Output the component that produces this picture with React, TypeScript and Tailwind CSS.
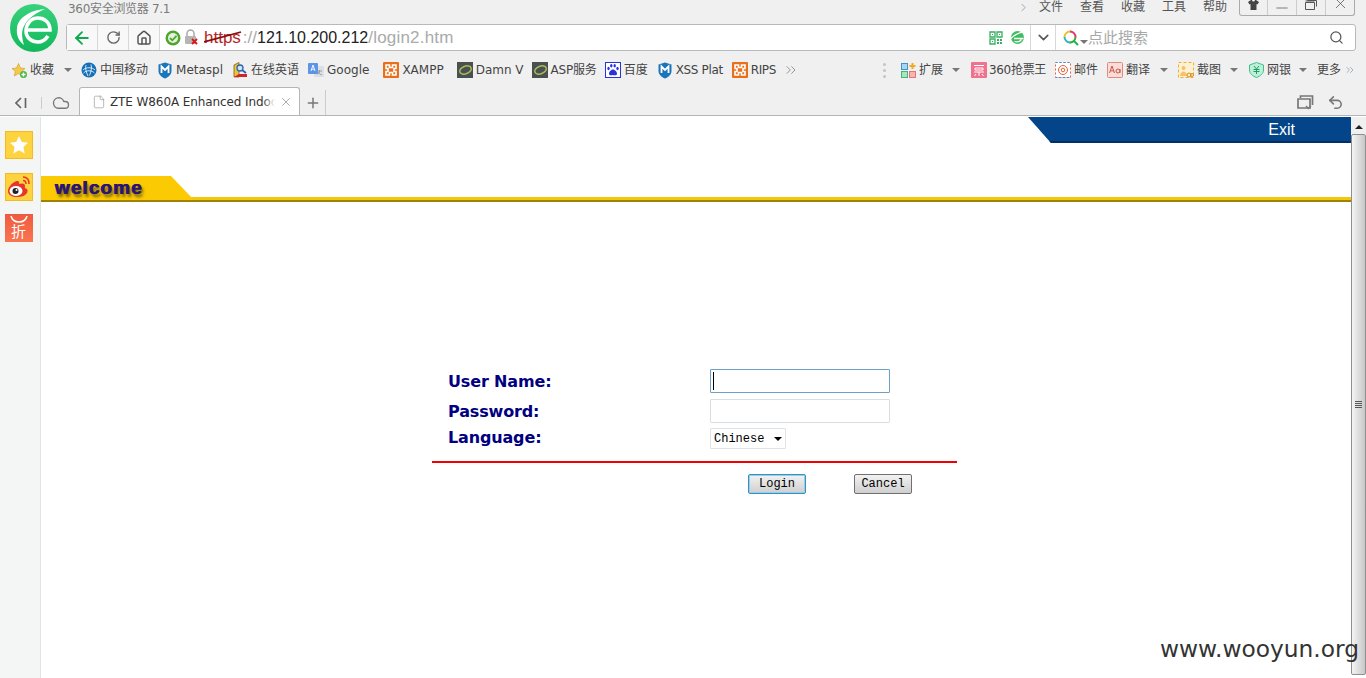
import type { ReactNode } from "react";
import { ArrowLeft, RotateCw, Home, Search, ChevronDown, ChevronRight, Minus, X, Plus, Cloud, File, ChevronsRight, Undo2 } from "lucide-react";

const Caret = ({ className = "" }: { className?: string }) => (
    <span className={`inline-block w-0 h-0 border-x-[4px] border-x-transparent border-t-[4px] border-t-[#777] ${className}`} />
);

const Xampp = () => (
    <svg width="16" height="16" viewBox="0 0 16 16">
        <rect width="16" height="16" rx="1" fill="#e8701a" />
        <path d="M3 3h3.500v2.500h3V3H13v3.500h-2v3h2V13H9.500v-2.500h-3V13H3V9.500h2v-3H3z" fill="none" stroke="#fff" strokeWidth="1.600" />
    </svg>
);

const Shield = ({ fill = "#1b75bb" }: { fill?: string }) => (
    <svg width="14" height="17" viewBox="0 0 14 17">
        <path d="M7 .5 13.500 2.500V9c0 3.500-3 6-6.500 7.500C3.500 15 .5 12.500.5 9V2.500z" fill={fill} />
        <path d="M3.500 11V4.500L7 8l3.500-3.500V11" fill="none" stroke="#fff" strokeWidth="1.800" />
    </svg>
);

const Dvwa = () => (
    <svg width="16" height="16" viewBox="0 0 16 16">
        <rect width="16" height="16" fill="#4a4f52" />
        <ellipse cx="8.500" cy="8" rx="6" ry="3.800" transform="rotate(-20 8.500 8)" fill="none" stroke="#a8bb55" strokeWidth="1.500" />
    </svg>
);

type Mark = { icon: ReactNode; label: string; ml: string; gap: string; caret?: string; text?: string };

const leftMarks: Mark[] = [
    {
        icon: (
            <svg width="17" height="17" viewBox="0 0 17 17">
                <path d="M7.500 1.500 9.500 6l4.500.5-3.300 3 1 4.500-4.200-2.400L3.300 14l1-4.500L1 6.500 5.500 6z" fill="#f5c94a" stroke="#c99b2a" strokeWidth=".6" />
                <circle cx="12.500" cy="12.500" r="3.500" fill="#4fb848" />
                <path d="M12.500 10.500v4M10.500 12.500h4" stroke="#fff" strokeWidth="1.300" />
            </svg>
        ),
        label: "收藏",
        ml: "ml-[11px]",
        gap: "gap-[2px]",
        caret: "ml-[8px]",
    },
    {
        icon: (
            <svg width="16" height="16" viewBox="0 0 16 16">
                <circle cx="8" cy="8" r="7.500" fill="#1670b8" />
                <path d="M2 8c3-3 9-3 12 0M2.500 11c3-3 8-3 11 0M5 3c-1 3 0 7 2 11M10 2.500c1 3 0 8-1.500 11" fill="none" stroke="#fff" strokeWidth=".8" />
            </svg>
        ),
        label: "中国移动",
        ml: "ml-[9px]",
        gap: "gap-[3px]",
    },
    { icon: <Shield />, label: "Metaspl", ml: "ml-[10px]", gap: "gap-[4px]" },
    {
        icon: (
            <svg width="16" height="16" viewBox="0 0 16 16">
                <path d="M2 15V3l5-2.500V15z" fill="#e9c33a" stroke="#8a5a10" strokeWidth=".8" />
                <path d="M2 15h13v-3H7z" fill="#d1232a" />
                <circle cx="8" cy="6" r="3" fill="#cfe6f7" stroke="#2a63b5" strokeWidth="1.300" />
                <path d="m10 8 4 3" stroke="#2a63b5" strokeWidth="1.800" />
            </svg>
        ),
        label: "在线英语",
        ml: "ml-[9px]",
        gap: "gap-[3px]",
    },
    {
        icon: (
            <svg width="16" height="16" viewBox="0 0 16 16">
                <rect x="6" y="4" width="10" height="11" rx="1" fill="#dcdfe4" />
                <rect width="10" height="11" rx="1" y="1" fill="#5e94e8" />
                <path d="m3 9 2-6 2 6M3.800 7.200h2.400" fill="none" stroke="#fff" strokeWidth=".9" />
                <path d="M9.500 9h4.500M11.500 8v1c0 2-1 3-2 3.500M10.500 10c.5 1.500 2 2.500 3.500 3" fill="none" stroke="#8b8f96" strokeWidth=".8" />
            </svg>
        ),
        label: "Google",
        ml: "ml-[9px]",
        gap: "gap-[3px]",
    },
    { icon: <Xampp />, label: "XAMPP", ml: "ml-[14px]", gap: "gap-[3px]" },
    { icon: <Dvwa />, label: "Damn V", ml: "ml-[13px]", gap: "gap-[3px]" },
    { icon: <Dvwa />, label: "ASP服务", ml: "ml-[8px]", gap: "gap-[3px]", text: "tracking-[-0.2px]" },
    {
        icon: (
            <svg width="16" height="16" viewBox="0 0 16 16">
                <rect x=".5" y=".5" width="15" height="15" fill="#fff" stroke="#2932e1" />
                <path d="M8 7.500c-2 0-4 2.500-4 4.200 0 2 2.500 1.700 4 1.300 1.500.4 4 .7 4-1.300 0-1.700-2-4.200-4-4.200z" fill="#2932e1" />
                <ellipse cx="3.500" cy="6.500" rx="1.200" ry="1.700" fill="#2932e1" />
                <ellipse cx="6.300" cy="3.800" rx="1.200" ry="1.800" fill="#2932e1" />
                <ellipse cx="9.700" cy="3.800" rx="1.200" ry="1.800" fill="#2932e1" />
                <ellipse cx="12.500" cy="6.500" rx="1.200" ry="1.700" fill="#2932e1" />
            </svg>
        ),
        label: "百度",
        ml: "ml-[8px]",
        gap: "gap-[3px]",
    },
    { icon: <Shield />, label: "XSS Plat", ml: "ml-[10px]", gap: "gap-[4px]", text: "tracking-[-0.35px]" },
    { icon: <Xampp />, label: "RIPS", ml: "ml-[9px]", gap: "gap-[3px]", text: "tracking-[-0.4px]" },
];

const rightMarks: Mark[] = [
    {
        icon: (
            <svg width="16" height="16" viewBox="0 0 16 16">
                <rect x=".5" y="1.500" width="6" height="6" fill="#a9d4f2" stroke="#4a90c8" />
                <rect x=".5" y="9.500" width="6" height="6" fill="#a3e6c0" stroke="#49b27c" />
                <rect x="8.500" y="9.500" width="6" height="6" fill="#f8b3b3" stroke="#d97a7a" />
                <path d="M11.500 1v6M8.500 4h6" stroke="#f3a91f" strokeWidth="2" />
            </svg>
        ),
        label: "扩展",
        ml: "ml-0",
        gap: "gap-[2px]",
        caret: "ml-[7px]",
    },
    {
        icon: (
            <svg width="16" height="16" viewBox="0 0 16 16">
                <rect width="16" height="16" rx="1" fill="#f0728f" />
                <path d="M3 3.500h10M4 6h8v2H4zM3 10h10M8 10v4M5 12l-1.500 2M11 12l1.500 2" fill="none" stroke="#fff" strokeWidth="1" />
            </svg>
        ),
        label: "360抢票王",
        ml: "ml-[11px]",
        gap: "gap-[2px]",
        text: "tracking-[-0.3px]",
    },
    {
        icon: (
            <svg width="16" height="16" viewBox="0 0 16 16">
                <rect x=".5" y=".5" width="15" height="15" fill="#fff" stroke="#e8603c" strokeDasharray="2 2" />
                <path d="M.5 15.500h15M.5.5h15" stroke="#3b8ee8" strokeDasharray="2 2" />
                <circle cx="8" cy="8" r="4.500" fill="none" stroke="#e8603c" />
                <circle cx="8" cy="8" r="1.800" fill="none" stroke="#e8603c" />
            </svg>
        ),
        label: "邮件",
        ml: "ml-[9px]",
        gap: "gap-[3px]",
    },
    {
        icon: (
            <svg width="16" height="16" viewBox="0 0 16 16">
                <rect x=".5" y=".5" width="15" height="15" rx="1" fill="#fbdcd6" stroke="#d98c80" />
                <path d="m2.500 11 2.500-7 2.500 7M3.400 8.800h3.200M13 7v4" fill="none" stroke="#c9574a" />
                <circle cx="11" cy="9" r="2" fill="none" stroke="#c9574a" />
            </svg>
        ),
        label: "翻译",
        ml: "ml-[9px]",
        gap: "gap-[3px]",
        caret: "ml-[7px]",
    },
    {
        icon: (
            <svg width="16" height="16" viewBox="0 0 16 16">
                <rect x=".5" y=".5" width="15" height="15" fill="#fdf1d2" stroke="#f2ae30" strokeDasharray="3 2" />
                <circle cx="5.500" cy="6" r="2" fill="#f2c36b" />
                <path d="M2 14c0-3 2-4.500 3.500-4.500S9 11 9 14z" fill="#f2c36b" />
                <circle cx="11" cy="13" r="2" fill="none" stroke="#d98a20" />
                <circle cx="14" cy="13" r="1.500" fill="none" stroke="#d98a20" />
            </svg>
        ),
        label: "截图",
        ml: "ml-[10px]",
        gap: "gap-[3px]",
        caret: "ml-[6px]",
    },
    {
        icon: (
            <svg width="15" height="16" viewBox="0 0 15 16">
                <path d="M7.500.5 14.500 3v5c0 3.500-3 6-7 7.500-4-1.500-7-4-7-7.500V3z" fill="#bdf0d8" stroke="#3fbf8a" />
                <path d="m5 4 2.500 3L10 4M4.500 7.500h6M4.500 9.500h6M7.500 7v5" fill="none" stroke="#1f9a68" />
            </svg>
        ),
        label: "网银",
        ml: "ml-[11px]",
        gap: "gap-[3px]",
        caret: "ml-[5px]",
    },
];

const menus = ["文件", "查看", "收藏", "工具", "帮助"];

const BookmarkItem = ({ item }: { item: Mark }) => (
    <div className={`flex items-center shrink-0 ${item.ml} ${item.gap}`}>
        {item.icon}
        <span className={`whitespace-nowrap ${item.text ?? ""}`}>{item.label}</span>
        {item.caret && <Caret className={item.caret} />}
    </div>
);

const App = () => {
    return (
        <div className="relative w-[1366px] h-[678px] overflow-hidden bg-white text-[12px] text-[#444] [font-family:'DejaVu_Sans','Noto_Sans_CJK_SC',sans-serif]">
            {/* browser frame */}
            <div className="relative h-[116px] bg-[#f0f0f0] border-b border-[#b5b5b5]">
                <svg className="absolute left-[10px] top-[4px]" width="48" height="48" viewBox="0 0 48 48">
                    <defs>
                        <linearGradient id="logoFill" x1="0" y1="0" x2="0" y2="1">
                            <stop offset="0" stopColor="#38d27c" />
                            <stop offset="1" stopColor="#12b85c" />
                        </linearGradient>
                    </defs>
                    <circle cx="24" cy="24" r="24" fill="url(#logoFill)" />
                    <path d="M17 26H40C40 18 34 14 28 14 21 14 16 20 16 27 16 34 22 38 28 38 33 38 36 35 38 32" fill="none" stroke="#fff" strokeWidth="3.600" />
                    <path d="M35 5C20 6 8 14 7 24 6 32 9 37 14 41 12 34 11 28 14 22 18 14 26 9 35 5z" fill="#fff" />
                </svg>

                <div className="flex h-[24px] pl-[68px] pt-[1px]">
                    <span className="text-[12px] tracking-[-0.3px] text-[#7a7a7a] leading-[16px]">360安全浏览器 7.1</span>
                    <div className="ml-auto flex items-start text-[#555]">
                        <ChevronRight size={13} strokeWidth={1.3} className="text-[#888] mr-[9px]" />
                        {menus.map((m) => (
                            <span key={m} className="w-[41px] leading-[13px] whitespace-nowrap">{m}</span>
                        ))}
                        <div className="-mt-[1px] mr-[11px] ml-[-5px] flex h-[16px] w-[116px] rounded-b-[3px] border border-t-0 border-[#aaa] text-[#555]">
                            <div className="flex w-[28px] justify-center border-r border-[#ccc]">
                                <svg width="13" height="10" viewBox="0 0 13 10"><path d="M4 0 1 2l1.500 2.500L3.500 4v6h6V4l1 .5L12 2 9 0H8a1.500 1.500 0 0 1-3 0z" fill="#444" /></svg>
                            </div>
                            <div className="flex w-[29px] justify-center border-r border-[#ccc]"><Minus size={18} strokeWidth={1} className="-mt-[1px]" /></div>
                            <div className="flex w-[29px] justify-center border-r border-[#ccc]">
                                <svg width="12" height="10" viewBox="0 0 12 10"><path d="M.5 2.500h9v7h-9zM.5 1h9M2.500 0v.5h9v6" fill="none" stroke="#555" /></svg>
                            </div>
                            <div className="flex flex-1 justify-center"><X size={17} strokeWidth={1.100} className="-mt-[5px]" /></div>
                        </div>
                    </div>
                </div>

                {/* address bar */}
                <div className="ml-[66px] mr-[10px] flex h-[27px] items-center rounded-[3px] border border-[#b9b9b9] bg-white">
                    <div className="flex h-full w-[31px] items-center justify-center border-r border-[#d8d8d8] bg-[#f8f8f8]">
                        <ArrowLeft size={20} strokeWidth={2.2} className="text-[#11a84f]" />
                    </div>
                    <div className="flex h-full w-[31px] items-center justify-center border-r border-[#d8d8d8] bg-[#f8f8f8]">
                        <RotateCw size={15} strokeWidth={2.200} className="text-[#666]" />
                    </div>
                    <div className="flex h-full w-[31px] items-center justify-center border-r border-[#d8d8d8] bg-[#f8f8f8]">
                        <Home size={16} strokeWidth={2.200} className="text-[#555]" />
                    </div>
                    <svg className="ml-[5px]" width="16" height="16" viewBox="0 0 16 16">
                        <circle cx="8" cy="8" r="7.500" fill="#4fa52e" />
                        <circle cx="8" cy="8" r="5" fill="#e6f3dc" />
                        <path d="m5 8 2.300 2.300L11.500 5.800" fill="none" stroke="#4fa52e" strokeWidth="1.800" />
                    </svg>
                    <svg className="ml-[3px]" width="15" height="17" viewBox="0 0 15 17">
                        <path d="M3 7V4.500a3.500 3.500 0 0 1 7 0V7" fill="none" stroke="#aaa" strokeWidth="1.500" />
                        <rect x="1" y="7" width="11" height="8" rx="1" fill="#b5b5b5" />
                        <path d="m8 10 5 5M13 10l-5 5" stroke="#d8161b" strokeWidth="1.800" />
                    </svg>
                    <div className="ml-[5px] flex flex-1 items-baseline text-[17px] leading-[20px] text-[#aaa] [font-family:'Liberation_Sans',sans-serif]">
                        <span className="relative text-[#b32a2a]">
                            https
                            <svg className="absolute left-0 top-[3px]" width="38" height="14" viewBox="0 0 38 14">
                                <path d="M0 11 37 1" stroke="#8a0c0c" strokeWidth="1.800" />
                            </svg>
                        </span>
                        <span className="ml-[2px]">://</span>
                        <span className="text-[16px] text-[#222]">121.10.200.212</span>
                        <span className="tracking-[0.2px]">/login2.htm</span>
                    </div>
                    <svg width="14" height="14" viewBox="0 0 14 14">
                        <path d="M1 1h5v5H1zM8 1h5v5H8zM1 8h5v5H1z" fill="none" stroke="#37b060" strokeWidth="1.300" />
                        <path d="M3 3h1v1H3zM10 3h1v1h-1zM3 10h1v1H3zM8 8h2v2H8zM11 8h2v2h-2zM8 11h2v2H8zM11 11h2v2h-2z" fill="#37b060" />
                    </svg>
                    <svg className="ml-[7px]" width="15" height="15" viewBox="0 0 15 15">
                        <circle cx="7.500" cy="7.500" r="6.500" fill="#3ebd5e" />
                        <path d="M1 8.500C4 4.500 9 3 14.500 1M4 8.500h9.500M4.500 11.500c3 1 5.500 0 7-2" fill="none" stroke="#fff" strokeWidth="1.300" />
                    </svg>
                    <div className="ml-[5px] flex h-full w-[26px] items-center justify-center border-x border-[#d8d8d8]">
                        <ChevronDown size={17} strokeWidth={2.2} className="text-[#555]" />
                    </div>
                    <div className="flex h-full w-[299px] items-center">
                        <svg className="ml-[7px]" width="16" height="16" viewBox="0 0 16 16">
                            <circle cx="7" cy="7" r="5.500" fill="none" stroke="#e9c11e" strokeWidth="1.800" />
                            <path d="M7 1.500a5.500 5.500 0 0 1 5.500 5.500" fill="none" stroke="#e8348c" strokeWidth="1.800" />
                            <path d="M1.500 7A5.500 5.500 0 0 0 7 12.500" fill="none" stroke="#25b8e6" strokeWidth="1.800" />
                            <path d="M7 12.500A5.500 5.500 0 0 0 12.500 7" fill="none" stroke="#23b04a" strokeWidth="1.800" />
                            <path d="m11 11 4 4" stroke="#23b04a" strokeWidth="2" />
                        </svg>
                        <Caret className="mt-[9px] ml-[1px] border-x-[2.500px] border-t-[3px] border-t-[#555]" />
                        <span className="text-[15px] leading-[20px] text-[#a8a8a8]">点此搜索</span>
                        <Search size={15} strokeWidth={2} className="ml-auto mr-[11px] text-[#555]" />
                    </div>
                </div>

                {/* bookmarks */}
                <div className="flex h-[38px] items-center">
                    {leftMarks.map((m) => (
                        <BookmarkItem key={m.label + m.ml} item={m} />
                    ))}
                    <ChevronsRight size={16} strokeWidth={1.300} className="ml-[7px] text-[#888]" />
                    <div className="ml-[84px] mr-[15px] flex flex-col gap-[3px]">
                        <span className="h-[3px] w-[3px] rounded-full bg-[#c4c4c4]" />
                        <span className="h-[3px] w-[3px] rounded-full bg-[#c4c4c4]" />
                        <span className="h-[3px] w-[3px] rounded-full bg-[#c4c4c4]" />
                    </div>
                    {rightMarks.map((m) => (
                        <BookmarkItem key={m.label} item={m} />
                    ))}
                    <span className="ml-[10px] whitespace-nowrap">更多</span>
                    <ChevronsRight size={12} strokeWidth={1.500} className="ml-[3px] text-[#8a9bb0]" />
                </div>

                {/* tabs */}
                <div className="flex h-[26px] items-end">
                    <div className="flex h-[25px] w-[79px] items-center">
                        <svg className="ml-[15px]" width="12" height="12" viewBox="0 0 12 12"><path d="M6 1 1 6l5 5M10.500 1v10" fill="none" stroke="#666" strokeWidth="1.700" /></svg>
                        <span className="ml-[14px] h-[12px] w-px bg-[#ccc]" />
                        <Cloud size={18} strokeWidth={1.800} className="ml-[10px] text-[#777]" />
                    </div>
                    <div className="relative z-10 flex h-[28px] w-[221px] items-center rounded-t-[3px] border border-b-0 border-[#b5b5b5] bg-white pl-[12px] text-[#333]">
                        <File size={14} strokeWidth={1} className="text-[#888]" />
                        <span className="relative ml-[4px] w-[165px] overflow-hidden whitespace-nowrap tracking-[-0.1px] pt-[1px]">
                            ZTE W860A Enhanced Indoor
                            <span className="absolute right-0 top-0 h-full w-[12px] bg-gradient-to-r from-transparent to-white" />
                        </span>
                        <X size={14} strokeWidth={1.400} className="ml-[4px] text-[#999]" />
                    </div>
                    <div className="flex h-[25px] w-[26px] items-center justify-center border-r border-[#ccc]">
                        <Plus size={16} strokeWidth={2.200} className="text-[#777]" />
                    </div>
                    <div className="ml-auto mr-[22px] flex h-[25px] items-center gap-[13px] text-[#777]">
                        <svg width="17" height="15" viewBox="0 0 17 15">
                            <path d="M3.500 3V1h12v9M1 4h12v9H1z" fill="none" stroke="#777" strokeWidth="1.700" />
                            <path d="m9 11 2.500 2.500L14 11" fill="none" stroke="#777" strokeWidth="1.300" />
                        </svg>
                        <Undo2 size={17} strokeWidth={2.200} />
                    </div>
                </div>
            </div>

            {/* page */}
            <div className="flex h-[562px]">
                <aside className="mt-[1px] flex w-[41px] shrink-0 flex-col items-center gap-[14px] border-r border-[#e2e4e4] bg-[#f4f5f5] pr-[3px] pt-[14px]">
                    <div className="flex h-[28px] w-[28px] items-center justify-center border border-[#f5bb1e] bg-[#fdd43f]">
                        <svg width="20" height="20" viewBox="0 0 20 20"><path d="m10 1 2.800 6 6.200.7-4.600 4.300 1.300 6.500L10 15.200l-5.700 3.300L5.600 12 1 7.700 7.200 7z" fill="#fff" /></svg>
                    </div>
                    <div className="flex h-[28px] w-[28px] items-center justify-center border border-[#f5bb1e] bg-[#fdd43f]">
                        <svg width="26" height="24" viewBox="0 0 26 24">
                            <path d="M2 16c0-5 7-11 10-10 2 1 1 3 1 3 3-1 6-1 6 2 0 1-.5 1.500 0 2 3 1 3 3 2 5-2 3-6 4-10 4-5 0-9-2-9-6z" fill="#e6362c" />
                            <ellipse cx="10" cy="16" rx="6.500" ry="5" fill="#fff" />
                            <circle cx="9.500" cy="16" r="3" fill="#222" />
                            <circle cx="10.500" cy="15" r="1" fill="#fff" />
                            <path d="M17 2c4 0 6 3 6 7M17 5.500c2 0 3 1.500 3 3.500" fill="none" stroke="#e6362c" strokeWidth="1.500" />
                        </svg>
                    </div>
                    <div className="relative -mt-px flex h-[28px] w-[28px] flex-col items-center bg-gradient-to-b from-[#ef5a3e] to-[#fa7450]">
                        <svg width="20" height="9" viewBox="0 0 20 9" className="mt-[1px]"><path d="M2 1c2 8 14 8 16 0" fill="none" stroke="#fff" strokeWidth="1.500" /></svg>
                        <span className="text-[15px] leading-[17px] text-white">折</span>
                    </div>
                </aside>

                <main className="flex min-w-0 flex-1 flex-col pt-[1px]">
                    <div className="flex justify-end">
                        <div className="h-[26px] w-[323px] bg-[#044589] border-b-[2px] border-[#023066] pr-[56px] text-right text-[16px] leading-[26px] text-white [clip-path:polygon(0_0,100%_0,100%_100%,23px_100%)] [font-family:'Liberation_Sans',sans-serif]">
                            Exit
                        </div>
                    </div>

                    <div className="mt-[33px] h-[26px] border-b-[2px] border-[#a08200]">
                        <div className="relative h-[24px]">
                            <div className="absolute inset-x-0 bottom-0 h-[3px] bg-[#f3c70b]" />
                            <div className="relative h-[24px] w-[153px] bg-[#fcca02] pl-[14px] text-[19px] font-bold leading-[24px] tracking-[1.100px] text-[#2b1477] [clip-path:polygon(0_0,130px_0,153px_100%,0_100%)] [font-family:'Liberation_Sans',sans-serif] [text-shadow:2px_3px_3px_#6b5a10,0.5px_0_0_#2b1477,-0.5px_0_0_#2b1477]">
                                welcome
                            </div>
                        </div>
                    </div>

                    <form className="ml-[391px] mt-[167px] w-[525px]">
                        <div className="grid grid-cols-[262px_1fr] pl-[16px] text-[16px] font-bold tracking-[-0.15px] text-[#000080]">
                            <label className="flex h-[24px] items-center pt-[2px]">User Name:</label>
                            <div className="relative h-[24px]">
                                <input className="h-[24px] w-[180px] rounded-[1px] border border-[#6c9fc6] bg-white outline-none" />
                                <span className="absolute left-[3px] top-[3px] h-[18px] w-px bg-black" />
                            </div>
                            <label className="mt-[6px] flex h-[24px] items-center pt-[2px]">Password:</label>
                            <input className="mt-[6px] h-[24px] w-[180px] rounded-[1px] border border-[#d8dde2] bg-white outline-none" type="password" />
                            <label className="mt-[5px] flex h-[21px] items-center pb-[2px]">Language:</label>
                            <div className="mt-[5px] flex h-[21px] w-[76px] items-center rounded-[1px] border border-[#dfe3e6] pl-[3px] text-[12px] font-normal tracking-normal text-black [font-family:'Liberation_Mono',monospace]">
                                Chinese
                                <span className="ml-[10px] h-0 w-0 border-x-[4px] border-t-[4px] border-x-transparent border-t-black" />
                            </div>
                        </div>
                        <div className="mt-[12px] h-[2px] bg-[#f00000]" />
                        <div className="mt-[11px] flex pl-[316px] text-[12px] text-black [font-family:'Liberation_Mono',monospace]">
                            <button type="button" className="h-[20px] w-[58px] rounded-[2px] border border-[#3d8fc0] bg-gradient-to-b from-[#f2f2f2] to-[#cfcfcf] leading-[16px] shadow-[inset_0_0_0_1px_#8fd0f0]">Login</button>
                            <button type="button" className="ml-[48px] h-[20px] w-[58px] rounded-[2px] border border-[#707070] bg-gradient-to-b from-[#f2f2f2] to-[#cfcfcf] leading-[16px]">Cancel</button>
                        </div>
                    </form>
                </main>

                {/* scrollbar */}
                <div className="mt-[1px] flex w-[15px] shrink-0 flex-col">
                    <div className="flex h-[17px] items-center justify-center bg-[#f0f0f0] pt-[2px]">
                        <span className="h-0 w-0 border-x-[4px] border-b-[4px] border-x-transparent border-b-[#222]" />
                    </div>
                    <div className="mb-[3px] flex flex-1 items-start justify-center rounded-[2px] border border-[#8f8f8f] bg-gradient-to-r from-[#f4f4f4] to-[#c8c8c8] pt-[266px]">
                        <div className="flex w-[7px] flex-col gap-px">
                            <span className="h-px bg-[#555]" />
                            <span className="h-px bg-[#555]" />
                            <span className="h-px bg-[#555]" />
                            <span className="h-px bg-[#555]" />
                        </div>
                    </div>
                </div>
            </div>

            {/* watermark */}
            <span className="absolute left-[1160px] top-[633px] text-[23.300px] leading-[32px] text-[#333] whitespace-nowrap">www.wooyun.org</span>
        </div>
    );
};

export default App;
